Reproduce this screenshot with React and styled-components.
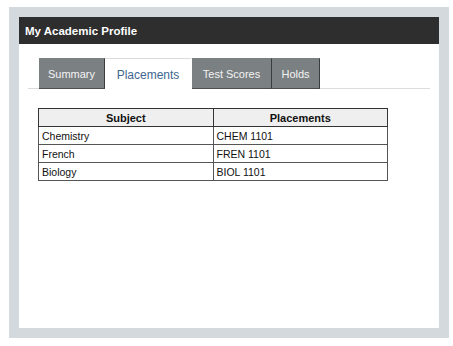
import React from "react";
import styled, { createGlobalStyle } from "styled-components";

const Global = createGlobalStyle`
  body {
    margin: 0;
    background: #fff;
    font-family: "Liberation Sans", Arial, sans-serif;
  }
`;

// css
const Frame = styled.div`
  margin: 7px 0 0 9px;
  width: 440px;
  height: 331px;
  box-sizing: border-box;
  padding: 10px;
  background: #d3d9dc;
  display: flex;
  flex-direction: column;
`;

const Header = styled.div`
  height: 27px;
  background: #2e2e2e;
  color: #fff;
  font-size: 11.5px;
  font-weight: bold;
  display: flex;
  align-items: center;
  padding-left: 6px;
`;

const Panel = styled.div`
  flex: 1;
  background: #fff;
  padding-top: 14px;
`;

const TabBar = styled.div`
  display: flex;
  margin: 0 9px;
  padding-left: 11px;
  border-bottom: 1px solid #dcdcdc;
`;

const Tab = styled.div`
  width: ${(p) => p.w}px;
  height: 31px;
  box-sizing: border-box;
  display: flex;
  align-items: center;
  justify-content: center;
  font-size: ${(p) => (p.active ? "12px" : "11px")};
  background: ${(p) => (p.active ? "#fff" : "#7b8083")};
  color: ${(p) => (p.active ? "#3e6690" : "#f4f4f4")};
  border-top: 1px solid ${(p) => (p.active ? "#dcdcdc" : "#7b8083")};
  border-right: 1px solid ${(p) => (p.active ? "#fff" : "#3a3d3f")};
  border-bottom: 1px solid ${(p) => (p.active ? "#fff" : "#4b4f52")};
  margin-bottom: -1px;
  padding-top: ${(p) => (p.active ? "3px" : "0")};
`;

const Table = styled.table`
  margin: 19px 0 0 19px;
  width: 350px;
  border-collapse: collapse;
  font-size: 10.5px;
  color: #111;
  border: 1px solid #333;
`;

const Th = styled.th`
  height: 17px;
  padding: 0;
  background: #efefef;
  font-size: 11px;
  font-weight: bold;
  border: 1px solid #333;
  text-align: center;
`;

const Td = styled.td`
  height: 17px;
  padding: 0 0 0 3px;
  border: 1px solid #555;
  text-align: left;
  width: 50%;
`;

const tabs = [
  { name: "Summary", w: 66 },
  { name: "Placements", w: 87, active: true },
  { name: "Test Scores", w: 80 },
  { name: "Holds", w: 48 },
];

const rows = [
  ["Chemistry", "CHEM 1101"],
  ["French", "FREN 1101"],
  ["Biology", "BIOL 1101"],
];

function App() {
  return (
    <>
      <Global />
      <Frame>
        <Header>My Academic Profile</Header>
        <Panel>
          <TabBar>
            {tabs.map((t) => (
              <Tab key={t.name} w={t.w} active={t.active}>
                {t.name}
              </Tab>
            ))}
          </TabBar>
          <Table>
            <thead>
              <tr>
                <Th>Subject</Th>
                <Th>Placements</Th>
              </tr>
            </thead>
            <tbody>
              {rows.map((r) => (
                <tr key={r[0]}>
                  <Td>{r[0]}</Td>
                  <Td>{r[1]}</Td>
                </tr>
              ))}
            </tbody>
          </Table>
        </Panel>
      </Frame>
    </>
  );
}

export default App;
